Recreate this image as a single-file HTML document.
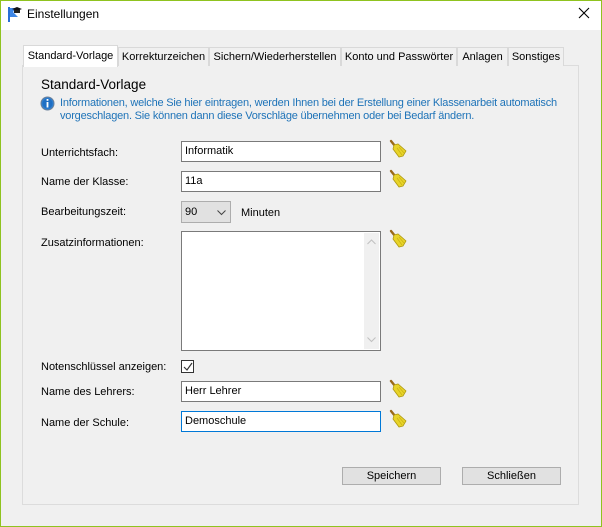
<!DOCTYPE html>
<html><head><meta charset="utf-8"><style>
*{box-sizing:border-box;margin:0;padding:0}
body{width:602px;height:527px;background:#f0f0f0;font-family:"Liberation Sans",sans-serif;font-size:11px;color:#000;position:relative;overflow:hidden}
.frame{position:absolute;left:0;top:0;width:602px;height:527px;border:1px solid #8fc31f}
.title{position:absolute;left:1px;top:1px;width:600px;height:29px;background:#fff}
.a{position:absolute;white-space:nowrap}
.tab{position:absolute;top:47px;height:19px;border:1px solid #d9d9d9;border-bottom:none;background:#f0f0f0;text-align:center;line-height:18px;font-size:11px;white-space:nowrap;overflow:hidden}
.panel{position:absolute;left:22px;top:65px;width:557px;height:440px;border:1px solid #dcdcdc;background:#f0f0f0}
.inp{position:absolute;background:#fff;border:1px solid #7a7a7a;height:21px;padding-left:3px;line-height:21px}
.btn{position:absolute;top:467px;width:99px;height:18px;border:1px solid #adadad;background:#e1e1e1;text-align:center;line-height:16px}
</style></head><body>
<div class="frame"></div>
<div class="title"></div>
<svg class="a" style="left:7px;top:5px" width="16" height="18" viewBox="0 0 16 18"><path d="M2 2v15" stroke="#2a6fd6" stroke-width="2"/><path d="M3 3h6l-3 4 5 5H3z" fill="#3d86e6"/><path d="M5 4l5-2 5 2-5 2z" fill="#111"/><path d="M7 5v3h6V5" fill="#222"/></svg>
<div class="a" style="left:27px;top:7px;font-size:12px">Einstellungen</div>
<svg class="a" style="left:578px;top:7px" width="12" height="12"><path d="M1 1l10 10M11 1L1 11" stroke="#000" stroke-width="1.1"/></svg>

<div class="panel"></div>
<div class="tab" style="left:118px;width:91px">Korrekturzeichen</div>
<div class="tab" style="left:209px;width:132px">Sichern/Wiederherstellen</div>
<div class="tab" style="left:341px;width:116px">Konto und Passwörter</div>
<div class="tab" style="left:457px;width:51px">Anlagen</div>
<div class="tab" style="left:508px;width:56px">Sonstiges</div>
<div class="tab" style="left:23px;top:45px;width:95px;height:22px;background:#fff;border-color:#d9d9d9;line-height:20px;z-index:2">Standard-Vorlage</div>

<div class="a" style="left:41px;top:77px;font-size:13.5px">Standard-Vorlage</div>
<svg class="a" style="left:40px;top:96px" width="15" height="15"><circle cx="7.5" cy="7.5" r="6.5" fill="#2f7fd0" stroke="#6a7f99"/><circle cx="7.5" cy="7.5" r="5" fill="#1f6fc4"/><rect x="6.6" y="3" width="1.8" height="1.8" fill="#fff"/><rect x="6.6" y="6" width="1.8" height="5.5" fill="#fff"/></svg>
<div class="a" style="left:60px;top:97px;color:#1e73b8;line-height:13px;letter-spacing:-0.2px">Informationen, welche Sie hier eintragen, werden Ihnen bei der Erstellung einer Klassenarbeit automatisch<br>vorgeschlagen. Sie können dann diese Vorschläge übernehmen oder bei Bedarf ändern.</div>

<div class="a" style="left:41px;top:147px">Unterrichtsfach:</div>
<div class="a" style="left:41px;top:176px">Name der Klasse:</div>
<div class="a" style="left:41px;top:206px">Bearbeitungszeit:</div>
<div class="a" style="left:41px;top:237px">Zusatzinformationen:</div>
<div class="a" style="left:41px;top:361px">Notenschlüssel anzeigen:</div>
<div class="a" style="left:41px;top:386px">Name des Lehrers:</div>
<div class="a" style="left:41px;top:417px">Name der Schule:</div>

<div class="inp" style="left:181px;top:141px;width:200px;line-height:19px">Informatik</div>
<div class="inp" style="left:181px;top:171px;width:200px;line-height:19px">11a</div>
<div class="inp" style="left:181px;top:201px;width:50px;background:#e1e1e1;border-color:#adadad;height:22px;line-height:20px">90<svg class="a" style="left:35px;top:8px" width="9" height="6"><path d="M.5 .5l4 4 4-4" stroke="#444" fill="none"/></svg></div>
<div class="a" style="left:241px;top:207px">Minuten</div>
<div class="inp" style="left:181px;top:231px;width:200px;height:120px"><div class="a" style="right:1px;top:1px;width:15px;height:116px;background:#f0f0f0"></div><svg class="a" style="right:4px;top:7px" width="9" height="6"><path d="M.5 5l4-4 4 4" stroke="#c0c0c0" fill="none"/></svg><svg class="a" style="right:4px;bottom:7px" width="9" height="6"><path d="M.5 .5l4 4 4-4" stroke="#c0c0c0" fill="none"/></svg></div>
<div class="a" style="left:181px;top:360px;width:13px;height:13px;border:1px solid #333;background:#fff"><svg class="a" style="left:1px;top:1px" width="10" height="10"><path d="M1 5l3 3 5-7" stroke="#333" fill="none" stroke-width="1.2"/></svg></div>
<div class="inp" style="left:181px;top:381px;width:200px;line-height:19px">Herr Lehrer</div>
<div class="inp" style="left:181px;top:411px;width:200px;border-color:#0078d7;line-height:19px">Demoschule</div>

<svg width="0" height="0" style="position:absolute"><defs><g id="br"><path d="M2 2l4 5" stroke="#9a6a1a" stroke-width="2.4" stroke-linecap="round"/><path d="M5 6l4-1 8 7-3 5-4 1-6-8z" fill="#e8d42a" stroke="#b09a10" stroke-width=".8"/><path d="M8 9l5 7M10 8l5 6" stroke="#c9b214" stroke-width=".7"/></g></defs></svg>
<svg class="a" style="left:389px;top:139px" width="20" height="20"><use href="#br"/></svg>
<svg class="a" style="left:389px;top:169px" width="20" height="20"><use href="#br"/></svg>
<svg class="a" style="left:389px;top:229px" width="20" height="20"><use href="#br"/></svg>
<svg class="a" style="left:389px;top:379px" width="20" height="20"><use href="#br"/></svg>
<svg class="a" style="left:389px;top:409px" width="20" height="20"><use href="#br"/></svg>

<div class="btn" style="left:342px">Speichern</div>
<div class="btn" style="left:462px">Schließen</div>
</body></html>
